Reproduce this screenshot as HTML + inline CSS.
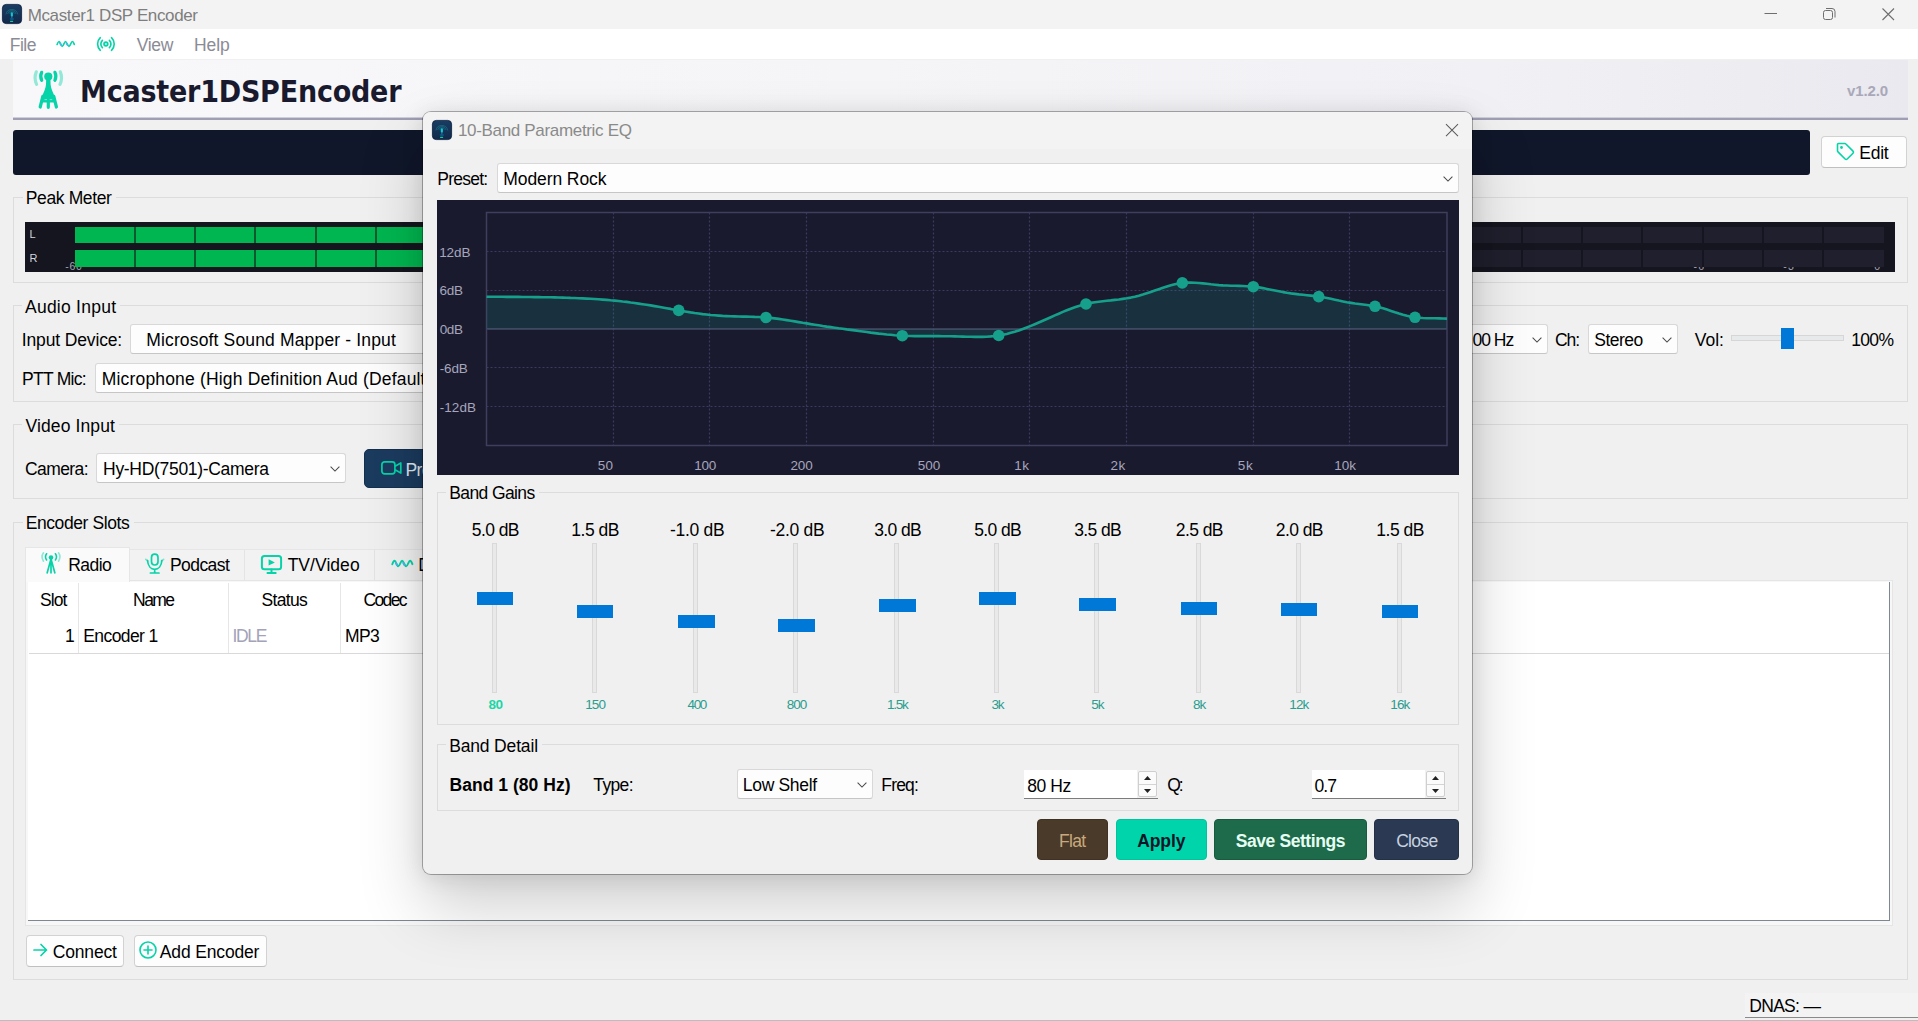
<!DOCTYPE html>
<html lang="en"><head><meta charset="utf-8"><title>Mcaster1 DSP Encoder</title>
<style>
html,body{margin:0;padding:0;}
body{width:1918px;height:1021px;position:relative;overflow:hidden;background:#f0f0f0;font-family:"Liberation Sans",sans-serif;}
.b{position:absolute;box-sizing:border-box;}
.t{position:absolute;white-space:pre;line-height:1;}
svg{position:absolute;overflow:visible;}
.gb{border:1px solid #dcdcdc;}
.combo{background:#fdfdfd;border:1px solid #d8d8d8;border-bottom-color:#c6c6c6;border-radius:3px;}
.btn{background:#fdfdfd;border:1px solid #d2d2d2;border-bottom-color:#bfbfbf;border-radius:4px;}
.spin{background:#fff;border-bottom:1px solid #7c7c7c;}

</style></head>
<body>
<div class="b " style="left:0px;top:0px;width:1918px;height:29px;background:#f3f3f3;"></div>
<svg style="left:2px;top:4px" width="20" height="20" viewBox="0 0 20 20"><defs><linearGradient id="ig1" x1="0" y1="0" x2="0" y2="1"><stop offset="0" stop-color="#193d63"/><stop offset="1" stop-color="#10294a"/></linearGradient></defs><rect x="0.4" y="0.4" width="19.2" height="19.2" rx="3.8" fill="url(#ig1)" stroke="#071b3c" stroke-width="0.8"/><g fill="none" stroke="#1b8a96" stroke-width="0.7" opacity=".75"><path d="M7.3 9.6a2.6 2.6 0 0 1 5 0"/><path d="M5.6 9.9a4.3 4.3 0 0 1 8.400 0"/><path d="M3.9 10.400a6 6 0 0 1 11.800 0"/></g><rect x="8.800" y="8.300" width="2.100" height="4.400" rx="1.050" fill="#10c8d4"/><rect x="9.300" y="12.500" width="1.100" height="1.800" fill="#1583b0"/><ellipse cx="9.850" cy="15" rx="2.200" ry="0.900" fill="#12568c"/><rect x="8" y="16.800" width="3.200" height="1.100" rx=".4" fill="#19c79a"/></svg>
<span class="t" style="left:27.64px;top:7px;font-size:17px;color:#7e7e7e;letter-spacing:-0.364px;">Mcaster1 DSP Encoder</span>
<svg style="left:1764px;top:7px" width="132" height="15" viewBox="1764 7 132 15"><g fill="none" stroke="#6e6e6e" stroke-width="1"><path d="M1764.500 13.500h12.500"/><rect x="1823.500" y="10.500" width="9" height="9" rx="2"/><path d="M1826 8.500h6a3 3 0 0 1 3 3v6"/></g><path d="M1882.500 8.500l11.500 11.500M1894 8.500l-11.500 11.500" stroke="#6e6e6e" stroke-width="1.100" fill="none"/></svg>
<div class="b " style="left:0px;top:29px;width:1918px;height:30px;background:#ffffff;"></div>
<span class="t" style="left:9.80px;top:37px;font-size:17.5px;color:#8b8b95;letter-spacing:-0.540px;">File</span>
<span class="t" style="left:136.71px;top:37px;font-size:17.5px;color:#8b8b95;letter-spacing:-0.337px;">View</span>
<span class="t" style="left:194.05px;top:37px;font-size:17.5px;color:#8b8b95;letter-spacing:-0.113px;">Help</span>
<svg style="left:56.4px;top:40px" width="19" height="8" viewBox="56.400 40 19 8"><g fill="none" stroke-width="1.650" stroke-linecap="round" stroke-linejoin="round"><path d="M57.500 44.500C58.200 42.500 58.800 41.500 59.500 41.500C60.600 41.500 61.500 46.300 62.600 46.300C63.800 46.300 64.800 41.500 65.900 41.500C67 41.500 68.200 46.300 69.400 46.300C70.600 46.300 71.600 41.500 72.700 41.500C73.500 41.500 74.200 43 74.700 44.400" stroke="#06d3a8"/><path d="M60.500 43.500L61.500 45.200M66.900 43.500L67.900 45.200" stroke="#4db5ee"/></g></svg>
<svg style="left:96px;top:36px" width="21" height="16" viewBox="96 36 21 16"><g fill="none" stroke="#06d3a8" stroke-width="1.650" stroke-linecap="round"><circle cx="105.900" cy="44" r="1.900" fill="rgba(15,210,166,.25)"/><path d="M102.400 40.300a5.200 5.200 0 0 0 0 7.400M109.400 40.300a5.200 5.200 0 0 1 0 7.400M100.300 37.700a8.700 8.700 0 0 0 0 12.600M111.500 37.700a8.700 8.700 0 0 1 0 12.600"/></g></svg>
<div class="b " style="left:13px;top:60px;width:1895px;height:58px;background:linear-gradient(90deg,#f8f8fa 0%,#f5f5f8 45%,#f1f1f5 78%,#e9e9ef 100%);"></div>
<div class="b " style="left:13px;top:117px;width:1895px;height:1px;background:#cfcedb;"></div>
<div class="b " style="left:13px;top:118px;width:1895px;height:2px;background:#9f9eb5;"></div>
<svg style="left:32.6px;top:69.6px" width="31" height="40" viewBox="0 0 31 40"><g fill="none" stroke="#06d3a8" stroke-linecap="round" stroke-width="3.200"><path d="M8.700 2.300Q6.700 6.300 8.700 10.300M21.900 2.300Q23.900 6.300 21.900 10.300"/><path d="M3.300 1.800Q0.700 8 3.600 14.300M27.300 1.800Q29.900 8 27 14.300" opacity=".42"/><path d="M9.800 26.500L7.200 37M15.300 30V37.300M20.800 26.500L23.400 37"/></g><circle cx="15.300" cy="6.600" r="4.100" fill="#06d3a8"/><path d="M13.200 8.500L13 14.500C12.800 16.500 12.400 18.300 11.700 20L9.400 25.500L8.300 32.500H22.300L21.200 25.500L18.900 20C18.200 18.300 17.800 16.500 17.600 14.500L17.400 8.500Z" fill="#06d3a8"/><rect x="11.500" y="29.200" width="2.500" height="0.900" fill="#f6f6f9" opacity=".55"/><rect x="16.700" y="29.200" width="2.500" height="0.900" fill="#f6f6f9" opacity=".55"/></svg>
<span class="t" style="left:80.02px;top:77px;font-size:30px;color:#1a1a2e;font-weight:700;font-family:'DejaVu Sans Condensed', 'DejaVu Sans', sans-serif;letter-spacing:-0.221px;">Mcaster1DSPEncoder</span>
<span class="t" style="left:1847.07px;top:83px;font-size:15px;color:#a9a8b9;font-weight:700;letter-spacing:-0.149px;">v1.2.0</span>
<div class="b " style="left:13px;top:130px;width:1797px;height:45px;background:#10172a;border-radius:3px;"></div>
<div class="b btn" style="left:1821px;top:136px;width:85.5px;height:32px;"></div>
<svg style="left:1836px;top:142px" width="19" height="19" viewBox="0 0 19 19"><path d="M1.500 2.500a1 1 0 0 1 1 -1h6.300a1.500 1.500 0 0 1 1.100 0.500l7.100 7.100a1.500 1.500 0 0 1 0 2.100l-5.800 5.800a1.500 1.500 0 0 1 -2.100 0l-7.100 -7.100a1.500 1.500 0 0 1 -0.500 -1.100z" fill="none" stroke="#06d3a8" stroke-width="1.600" stroke-linejoin="round"/><circle cx="5.500" cy="5.500" r="1.400" fill="#06d3a8"/></svg>
<span class="t" style="left:1859.25px;top:145px;font-size:17.5px;color:#000;letter-spacing:-0.247px;">Edit</span>
<div class="b gb" style="left:13px;top:197px;width:1895px;height:86px;"></div>
<div class="b " style="left:23.3px;top:195px;width:93px;height:5px;background:#f0f0f0;"></div>
<span class="t" style="left:25.80px;top:190px;font-size:17.5px;color:#000;letter-spacing:-0.375px;">Peak Meter</span>
<div class="b " style="left:25px;top:222px;width:1870px;height:49.5px;background:#15151f;"></div>
<span class="t" style="left:29.49px;top:229px;font-size:11px;color:#d4d4dc;">L</span>
<span class="t" style="left:29.50px;top:253px;font-size:11px;color:#d4d4dc;">R</span>
<span class="t" style="left:65.34px;top:261px;font-size:10.5px;color:#a4a4b2;letter-spacing:0.664px;">-60</span>
<span class="t" style="left:1693.54px;top:261px;font-size:10.5px;color:#a4a4b2;letter-spacing:1.111px;">-6</span>
<span class="t" style="left:1783.34px;top:261px;font-size:10.5px;color:#a4a4b2;letter-spacing:1.156px;">-3</span>
<span class="t" style="left:1874.13px;top:261px;font-size:10.5px;color:#a4a4b2;">0</span>
<div class="b " style="left:75px;top:226.5px;width:1809px;height:16.5px;background:#1f1f2d;"></div>
<div class="b " style="left:75px;top:226.5px;width:1356.75px;height:16.5px;background:#00b650;"></div>
<div class="b " style="left:134px;top:226.5px;width:1.7px;height:16.5px;background:#0b5a2e;"></div>
<div class="b " style="left:194px;top:226.5px;width:1.7px;height:16.5px;background:#0b5a2e;"></div>
<div class="b " style="left:254px;top:226.5px;width:1.7px;height:16.5px;background:#0b5a2e;"></div>
<div class="b " style="left:315px;top:226.5px;width:1.7px;height:16.5px;background:#0b5a2e;"></div>
<div class="b " style="left:375px;top:226.5px;width:1.7px;height:16.5px;background:#0b5a2e;"></div>
<div class="b " style="left:435px;top:226.5px;width:1.7px;height:16.5px;background:#0b5a2e;"></div>
<div class="b " style="left:496px;top:226.5px;width:1.7px;height:16.5px;background:#0b5a2e;"></div>
<div class="b " style="left:556px;top:226.5px;width:1.7px;height:16.5px;background:#0b5a2e;"></div>
<div class="b " style="left:616px;top:226.5px;width:1.7px;height:16.5px;background:#0b5a2e;"></div>
<div class="b " style="left:677px;top:226.5px;width:1.7px;height:16.5px;background:#0b5a2e;"></div>
<div class="b " style="left:737px;top:226.5px;width:1.7px;height:16.5px;background:#0b5a2e;"></div>
<div class="b " style="left:797px;top:226.5px;width:1.7px;height:16.5px;background:#0b5a2e;"></div>
<div class="b " style="left:857px;top:226.5px;width:1.7px;height:16.5px;background:#0b5a2e;"></div>
<div class="b " style="left:918px;top:226.5px;width:1.7px;height:16.5px;background:#0b5a2e;"></div>
<div class="b " style="left:978px;top:226.5px;width:1.7px;height:16.5px;background:#0b5a2e;"></div>
<div class="b " style="left:1038px;top:226.5px;width:1.7px;height:16.5px;background:#0b5a2e;"></div>
<div class="b " style="left:1099px;top:226.5px;width:1.7px;height:16.5px;background:#0b5a2e;"></div>
<div class="b " style="left:1159px;top:226.5px;width:1.7px;height:16.5px;background:#0b5a2e;"></div>
<div class="b " style="left:1219px;top:226.5px;width:1.7px;height:16.5px;background:#0b5a2e;"></div>
<div class="b " style="left:1280px;top:226.5px;width:1.7px;height:16.5px;background:#0b5a2e;"></div>
<div class="b " style="left:1340px;top:226.5px;width:1.7px;height:16.5px;background:#0b5a2e;"></div>
<div class="b " style="left:1400px;top:226.5px;width:1.7px;height:16.5px;background:#0b5a2e;"></div>
<div class="b " style="left:1460px;top:226.5px;width:1.7px;height:16.5px;background:#15151f;"></div>
<div class="b " style="left:1521px;top:226.5px;width:1.7px;height:16.5px;background:#15151f;"></div>
<div class="b " style="left:1581px;top:226.5px;width:1.7px;height:16.5px;background:#15151f;"></div>
<div class="b " style="left:1641px;top:226.5px;width:1.7px;height:16.5px;background:#15151f;"></div>
<div class="b " style="left:1702px;top:226.5px;width:1.7px;height:16.5px;background:#15151f;"></div>
<div class="b " style="left:1762px;top:226.5px;width:1.7px;height:16.5px;background:#15151f;"></div>
<div class="b " style="left:1822px;top:226.5px;width:1.7px;height:16.5px;background:#15151f;"></div>
<div class="b " style="left:75px;top:250px;width:1809px;height:16.5px;background:#1f1f2d;"></div>
<div class="b " style="left:75px;top:250px;width:1356.75px;height:16.5px;background:#00b650;"></div>
<div class="b " style="left:134px;top:250px;width:1.7px;height:16.5px;background:#0b5a2e;"></div>
<div class="b " style="left:194px;top:250px;width:1.7px;height:16.5px;background:#0b5a2e;"></div>
<div class="b " style="left:254px;top:250px;width:1.7px;height:16.5px;background:#0b5a2e;"></div>
<div class="b " style="left:315px;top:250px;width:1.7px;height:16.5px;background:#0b5a2e;"></div>
<div class="b " style="left:375px;top:250px;width:1.7px;height:16.5px;background:#0b5a2e;"></div>
<div class="b " style="left:435px;top:250px;width:1.7px;height:16.5px;background:#0b5a2e;"></div>
<div class="b " style="left:496px;top:250px;width:1.7px;height:16.5px;background:#0b5a2e;"></div>
<div class="b " style="left:556px;top:250px;width:1.7px;height:16.5px;background:#0b5a2e;"></div>
<div class="b " style="left:616px;top:250px;width:1.7px;height:16.5px;background:#0b5a2e;"></div>
<div class="b " style="left:677px;top:250px;width:1.7px;height:16.5px;background:#0b5a2e;"></div>
<div class="b " style="left:737px;top:250px;width:1.7px;height:16.5px;background:#0b5a2e;"></div>
<div class="b " style="left:797px;top:250px;width:1.7px;height:16.5px;background:#0b5a2e;"></div>
<div class="b " style="left:857px;top:250px;width:1.7px;height:16.5px;background:#0b5a2e;"></div>
<div class="b " style="left:918px;top:250px;width:1.7px;height:16.5px;background:#0b5a2e;"></div>
<div class="b " style="left:978px;top:250px;width:1.7px;height:16.5px;background:#0b5a2e;"></div>
<div class="b " style="left:1038px;top:250px;width:1.7px;height:16.5px;background:#0b5a2e;"></div>
<div class="b " style="left:1099px;top:250px;width:1.7px;height:16.5px;background:#0b5a2e;"></div>
<div class="b " style="left:1159px;top:250px;width:1.7px;height:16.5px;background:#0b5a2e;"></div>
<div class="b " style="left:1219px;top:250px;width:1.7px;height:16.5px;background:#0b5a2e;"></div>
<div class="b " style="left:1280px;top:250px;width:1.7px;height:16.5px;background:#0b5a2e;"></div>
<div class="b " style="left:1340px;top:250px;width:1.7px;height:16.5px;background:#0b5a2e;"></div>
<div class="b " style="left:1400px;top:250px;width:1.7px;height:16.5px;background:#0b5a2e;"></div>
<div class="b " style="left:1460px;top:250px;width:1.7px;height:16.5px;background:#15151f;"></div>
<div class="b " style="left:1521px;top:250px;width:1.7px;height:16.5px;background:#15151f;"></div>
<div class="b " style="left:1581px;top:250px;width:1.7px;height:16.5px;background:#15151f;"></div>
<div class="b " style="left:1641px;top:250px;width:1.7px;height:16.5px;background:#15151f;"></div>
<div class="b " style="left:1702px;top:250px;width:1.7px;height:16.5px;background:#15151f;"></div>
<div class="b " style="left:1762px;top:250px;width:1.7px;height:16.5px;background:#15151f;"></div>
<div class="b " style="left:1822px;top:250px;width:1.7px;height:16.5px;background:#15151f;"></div>
<div class="b gb" style="left:13px;top:305px;width:1895px;height:97px;"></div>
<div class="b " style="left:21.6px;top:303px;width:98.8px;height:5px;background:#f0f0f0;"></div>
<span class="t" style="left:24.98px;top:299px;font-size:17.5px;color:#000;letter-spacing:0.254px;">Audio Input</span>
<span class="t" style="left:21.79px;top:332px;font-size:17.5px;color:#000;letter-spacing:-0.142px;">Input Device:</span>
<div class="b combo" style="left:130px;top:324px;width:400px;height:29.5px;"></div>
<span class="t" style="left:146.21px;top:332px;font-size:17.5px;color:#000;letter-spacing:0.155px;">Microsoft Sound Mapper - Input</span>
<span class="t" style="left:22.05px;top:371px;font-size:17.5px;color:#000;letter-spacing:-0.741px;">PTT Mic:</span>
<div class="b combo" style="left:95px;top:363px;width:400px;height:29.5px;"></div>
<span class="t" style="left:101.80px;top:371px;font-size:17.5px;color:#000;letter-spacing:0.168px;">Microphone (High Definition Aud (Default</span>
<div class="b combo" style="left:1400px;top:324px;width:148px;height:29.5px;"></div>
<span class="t" style="left:1472.40px;top:332px;font-size:17.5px;color:#000;letter-spacing:-0.988px;">00 Hz</span>
<svg style="left:1531.5px;top:337px" width="10" height="6" viewBox="0 0 10 6"><path d="M0.600 0.600l4.400 4.500l4.400 -4.500" fill="none" stroke="#4a4a4a" stroke-width="1.050"/></svg>
<span class="t" style="left:1555.00px;top:332px;font-size:17.5px;color:#000;letter-spacing:-1.109px;">Ch:</span>
<div class="b combo" style="left:1588px;top:324px;width:89.5px;height:29.5px;"></div>
<span class="t" style="left:1594.23px;top:332px;font-size:17.5px;color:#000;letter-spacing:-0.490px;">Stereo</span>
<svg style="left:1661.5px;top:337px" width="10" height="6" viewBox="0 0 10 6"><path d="M0.600 0.600l4.400 4.500l4.400 -4.500" fill="none" stroke="#4a4a4a" stroke-width="1.050"/></svg>
<span class="t" style="left:1694.71px;top:332px;font-size:17.5px;color:#000;letter-spacing:0.024px;">Vol:</span>
<div class="b " style="left:1730.5px;top:335px;width:113.5px;height:5.5px;background:#e7eaea;border:1px solid #d6d6d6;"></div>
<div class="b " style="left:1780.5px;top:327.5px;width:13.5px;height:21.5px;background:#0078d7;"></div>
<span class="t" style="left:1851.19px;top:332px;font-size:17.5px;color:#000;letter-spacing:-0.670px;">100%</span>
<div class="b gb" style="left:13px;top:424px;width:1895px;height:75px;"></div>
<div class="b " style="left:21.6px;top:422px;width:97.7px;height:5px;background:#f0f0f0;"></div>
<span class="t" style="left:25.48px;top:418px;font-size:17.5px;color:#000;letter-spacing:0.114px;">Video Input</span>
<span class="t" style="left:25.00px;top:461px;font-size:17.5px;color:#000;letter-spacing:-0.590px;">Camera:</span>
<div class="b combo" style="left:96px;top:453px;width:249.5px;height:29.5px;"></div>
<span class="t" style="left:103.05px;top:461px;font-size:17.5px;color:#000;letter-spacing:-0.307px;">Hy-HD(7501)-Camera</span>
<svg style="left:329.5px;top:466px" width="10" height="6" viewBox="0 0 10 6"><path d="M0.600 0.600l4.400 4.500l4.400 -4.500" fill="none" stroke="#4a4a4a" stroke-width="1.050"/></svg>
<div class="b " style="left:363.5px;top:449px;width:120px;height:38.5px;background:#1b3b5f;border:1px solid #14304f;border-radius:5px;"></div>
<svg style="left:381px;top:461px" width="21" height="14" viewBox="0 0 21 14"><g fill="none" stroke="#06d3a8" stroke-width="1.700" stroke-linejoin="round"><rect x="0.900" y="0.900" width="13" height="12" rx="2.600"/><path d="M14 5.200l5.800 -3.300v10.200l-5.800 -3.300"/></g></svg>
<span class="t" style="left:405.60px;top:462px;font-size:17.5px;color:#dfe6ee;letter-spacing:-0.717px;">Preview</span>
<div class="b gb" style="left:13px;top:522px;width:1895px;height:457.5px;"></div>
<div class="b " style="left:23.1px;top:520px;width:110.7px;height:5px;background:#f0f0f0;"></div>
<span class="t" style="left:25.69px;top:515px;font-size:17.5px;color:#000;letter-spacing:-0.414px;">Encoder Slots</span>
<div class="b " style="left:25px;top:580px;width:1867.5px;height:345.5px;border:1px solid #e5e5e5;background:#f7f7f7;"></div>
<div class="b " style="left:28px;top:582px;width:1862px;height:338.5px;background:#fff;border-right:1px solid #7f8794;border-bottom:1px solid #7f8794;"></div>
<div class="b " style="left:129px;top:549px;width:116px;height:31px;background:#f2f2f2;border-top:1px solid #e6e6e6;border-right:1px solid #e4e4e4;"></div>
<div class="b " style="left:245px;top:549px;width:130px;height:31px;background:#f2f2f2;border-top:1px solid #e6e6e6;border-right:1px solid #e4e4e4;"></div>
<div class="b " style="left:375px;top:549px;width:130px;height:31px;background:#f2f2f2;border-top:1px solid #e6e6e6;border-right:1px solid #e4e4e4;"></div>
<div class="b " style="left:25px;top:547px;width:105px;height:35px;background:#fafafa;border:1px solid #e6e6e6;border-bottom:none;"></div>
<svg style="left:41.400px;top:552.300px" width="20" height="22.500" viewBox="0 0 20 23" preserveAspectRatio="none"><g fill="none" stroke="#06d3a8" stroke-linecap="round" stroke-width="1.600"><path d="M5.600 1.800Q3.400 5 5.600 8.200M14.400 1.800Q16.600 5 14.400 8.200"/><path d="M2.500 0.800Q-0.400 5 2.500 9.400M17.500 0.800Q20.400 5 17.500 9.400" opacity=".45"/><path d="M10 7L6 22M10 7V22M10 7L14 22" stroke-linecap="butt" stroke-width="1.700"/></g><circle cx="10" cy="5.600" r="2.300" fill="#06d3a8"/></svg>
<span class="t" style="left:68.24px;top:557px;font-size:17.5px;color:#000;letter-spacing:-0.566px;">Radio</span>
<svg style="left:144px;top:553px" width="21" height="22" viewBox="144 553 21 22"><g fill="none" stroke="#06d3a8" stroke-width="1.700" stroke-linecap="round"><rect x="151.500" y="554.200" width="6.500" height="10.800" rx="3.200"/><path d="M147.500 560.500c0.500 5.500 3.500 8.800 7.200 8.800s6.700 -3.300 7.200 -8.800M154.700 569.500v3.300M150.400 573h8.600"/><path d="M145.800 559.300l2 1.600M163.600 559.300l-2 1.600" opacity=".5"/></g></svg>
<span class="t" style="left:170.04px;top:557px;font-size:17.5px;color:#000;letter-spacing:-0.579px;">Podcast</span>
<svg style="left:260px;top:554px" width="23" height="21" viewBox="260 554 23 21"><g fill="none" stroke="#06d3a8" stroke-width="2" stroke-linejoin="round" stroke-linecap="round"><rect x="261.900" y="556" width="19.200" height="13.200" rx="2.500"/><path d="M271.500 569.500v3.300M267.500 573h8.200"/></g><path d="M268.600 559.200l6.300 3.200l-6.300 3.200z" fill="#06d3a8"/></svg>
<span class="t" style="left:287.64px;top:557px;font-size:17.5px;color:#000;letter-spacing:0.048px;">TV/Video</span>
<svg style="left:391px;top:559px" width="22.23" height="9.36" viewBox="56.400 40 19 8"><g fill="none" stroke-width="1.650" stroke-linecap="round" stroke-linejoin="round"><path d="M57.500 44.500C58.200 42.500 58.800 41.500 59.500 41.500C60.600 41.500 61.500 46.300 62.600 46.300C63.800 46.300 64.800 41.500 65.900 41.500C67 41.500 68.200 46.300 69.400 46.300C70.600 46.300 71.600 41.500 72.700 41.500C73.500 41.500 74.200 43 74.700 44.400" stroke="#06d3a8"/><path d="M60.500 43.500L61.500 45.200M66.900 43.500L67.900 45.200" stroke="#4db5ee"/></g></svg>
<span class="t" style="left:418.21px;top:557px;font-size:17.5px;color:#000;letter-spacing:-0.718px;">DSP</span>
<div class="b " style="left:78px;top:583px;width:1px;height:70px;background:#e6e6e6;"></div>
<div class="b " style="left:228px;top:583px;width:1px;height:70px;background:#e6e6e6;"></div>
<div class="b " style="left:340px;top:583px;width:1px;height:70px;background:#e6e6e6;"></div>
<div class="b " style="left:452px;top:583px;width:1px;height:70px;background:#e6e6e6;"></div>
<div class="b " style="left:29px;top:653px;width:1860px;height:1px;background:#d9d9d9;"></div>
<span class="t" style="left:40.04px;top:592px;font-size:17.5px;color:#000;letter-spacing:-0.945px;">Slot</span>
<span class="t" style="left:133.05px;top:592px;font-size:17.5px;color:#000;letter-spacing:-1.549px;">Name</span>
<span class="t" style="left:261.55px;top:592px;font-size:17.5px;color:#000;letter-spacing:-0.662px;">Status</span>
<span class="t" style="left:363.40px;top:592px;font-size:17.5px;color:#000;letter-spacing:-1.607px;">Codec</span>
<span class="t" style="left:65.07px;top:628px;font-size:17.5px;color:#000;">1</span>
<span class="t" style="left:83.24px;top:628px;font-size:17.5px;color:#000;letter-spacing:-0.582px;">Encoder 1</span>
<span class="t" style="left:232.41px;top:628px;font-size:17.5px;color:#a3a2b8;letter-spacing:-1.315px;">IDLE</span>
<span class="t" style="left:345.04px;top:628px;font-size:17.5px;color:#000;letter-spacing:-0.622px;">MP3</span>
<div class="b btn" style="left:26px;top:935px;width:97.5px;height:31.5px;"></div>
<svg style="left:33px;top:943px" width="15" height="14" viewBox="0 0 15 14"><path d="M1 7h12.500M8 1.500l5.500 5.500l-5.500 5.500" fill="none" stroke="#06d3a8" stroke-width="1.700" stroke-linecap="round" stroke-linejoin="round"/></svg>
<span class="t" style="left:52.84px;top:944px;font-size:17.5px;color:#000;letter-spacing:-0.196px;">Connect</span>
<div class="b btn" style="left:133.5px;top:935px;width:133px;height:31.5px;"></div>
<svg style="left:138.500px;top:941px" width="18" height="18" viewBox="0 0 18 18"><g fill="none" stroke="#06d3a8" stroke-width="1.600" stroke-linecap="round"><circle cx="9" cy="9" r="8"/><path d="M9 5v8M5 9h8"/></g></svg>
<span class="t" style="left:159.86px;top:944px;font-size:17.5px;color:#000;letter-spacing:-0.160px;">Add Encoder</span>
<div class="b " style="left:0px;top:1020px;width:1918px;height:1px;background:#bdbdbd;"></div>
<div class="b " style="left:1745px;top:992.5px;width:173px;height:25px;background:#f3f3f3;border-bottom:1px solid #8a8a8a;"></div>
<span class="t" style="left:1749.24px;top:998px;font-size:17.5px;color:#000;letter-spacing:-0.688px;">DNAS: —</span>
<div class="b " style="left:422px;top:111px;width:1051px;height:764px;background:#f0f0f0;background-clip:padding-box;border:1px solid rgba(0,0,0,.30);border-radius:9px;box-shadow:0 32px 64px rgba(0,0,0,.19),0 2px 21px rgba(0,0,0,.10);"></div>
<div class="b " style="left:423px;top:112px;width:1049px;height:37px;background:#f3f3f3;border-radius:8px 8px 0 0;"></div>
<svg style="left:432px;top:120px" width="20" height="20" viewBox="0 0 20 20"><defs><linearGradient id="ig2" x1="0" y1="0" x2="0" y2="1"><stop offset="0" stop-color="#193d63"/><stop offset="1" stop-color="#10294a"/></linearGradient></defs><rect x="0.4" y="0.4" width="19.2" height="19.2" rx="3.8" fill="url(#ig2)" stroke="#071b3c" stroke-width="0.8"/><g fill="none" stroke="#1b8a96" stroke-width="0.7" opacity=".75"><path d="M7.3 9.6a2.6 2.6 0 0 1 5 0"/><path d="M5.6 9.9a4.3 4.3 0 0 1 8.400 0"/><path d="M3.9 10.400a6 6 0 0 1 11.800 0"/></g><rect x="8.800" y="8.300" width="2.100" height="4.400" rx="1.050" fill="#10c8d4"/><rect x="9.300" y="12.500" width="1.100" height="1.800" fill="#1583b0"/><ellipse cx="9.850" cy="15" rx="2.200" ry="0.900" fill="#12568c"/><rect x="8" y="16.800" width="3.200" height="1.100" rx=".4" fill="#19c79a"/></svg>
<span class="t" style="left:457.91px;top:122px;font-size:17px;color:#8a8a8a;letter-spacing:-0.325px;">10-Band Parametric EQ</span>
<svg style="left:1445px;top:123px" width="15" height="15" viewBox="1445 123 15 15"><path d="M1446 124.200l12 12M1458 124.200l-12 12" stroke="#5c5c5c" stroke-width="1.050" fill="none"/></svg>
<span class="t" style="left:437.24px;top:171px;font-size:17.5px;color:#000;letter-spacing:-0.760px;">Preset:</span>
<div class="b combo" style="left:497px;top:163px;width:961.5px;height:30px;"></div>
<span class="t" style="left:503.25px;top:171px;font-size:17.5px;color:#000;letter-spacing:-0.083px;">Modern Rock</span>
<svg style="left:1442.8px;top:176px" width="10" height="6" viewBox="0 0 10 6"><path d="M0.600 0.600l4.400 4.500l4.400 -4.500" fill="none" stroke="#4a4a4a" stroke-width="1.050"/></svg>
<svg style="left:437px;top:200px" width="1022" height="275" viewBox="437 200 1022 275"><rect x="437" y="200" width="1022" height="275" fill="#1a1a2e"/><path d="M613.5 212.5V445.5" stroke="#3a3a62" stroke-width="1.200" stroke-dasharray="2 2" fill="none"/><path d="M709.5 212.5V445.5" stroke="#3a3a62" stroke-width="1.200" stroke-dasharray="2 2" fill="none"/><path d="M806.5 212.5V445.5" stroke="#3a3a62" stroke-width="1.200" stroke-dasharray="2 2" fill="none"/><path d="M933.5 212.5V445.5" stroke="#3a3a62" stroke-width="1.200" stroke-dasharray="2 2" fill="none"/><path d="M1029.5 212.5V445.5" stroke="#3a3a62" stroke-width="1.200" stroke-dasharray="2 2" fill="none"/><path d="M1126.5 212.5V445.5" stroke="#3a3a62" stroke-width="1.200" stroke-dasharray="2 2" fill="none"/><path d="M1253.5 212.5V445.5" stroke="#3a3a62" stroke-width="1.200" stroke-dasharray="2 2" fill="none"/><path d="M1349.5 212.5V445.5" stroke="#3a3a62" stroke-width="1.200" stroke-dasharray="2 2" fill="none"/><path d="M486.5 251.5H1447" stroke="#3a3a62" stroke-width="1.200" stroke-dasharray="2 2" fill="none"/><path d="M486.5 290.5H1447" stroke="#3a3a62" stroke-width="1.200" stroke-dasharray="2 2" fill="none"/><path d="M486.5 367.5H1447" stroke="#3a3a62" stroke-width="1.200" stroke-dasharray="2 2" fill="none"/><path d="M486.5 406.5H1447" stroke="#3a3a62" stroke-width="1.200" stroke-dasharray="2 2" fill="none"/><path d="M486.5 329H1447" stroke="#4a4a6a" stroke-width="1.500" fill="none"/><rect x="486.5" y="212.5" width="960.5" height="233.0" fill="none" stroke="#3e3e5e" stroke-width="1.500"/><path d="M486.5 296.8 L490.5 296.8 L494.5 296.8 L498.5 296.8 L502.5 296.8 L506.5 296.9 L510.5 296.9 L514.5 296.9 L518.5 296.9 L522.5 297.0 L526.5 297.0 L530.5 297.0 L534.5 297.1 L538.5 297.1 L542.5 297.2 L546.5 297.3 L550.5 297.3 L554.5 297.4 L558.5 297.5 L562.5 297.6 L566.5 297.7 L570.5 297.9 L574.5 298.0 L578.5 298.2 L582.5 298.4 L586.6 298.6 L590.6 298.8 L594.6 299.0 L598.6 299.3 L602.6 299.6 L606.6 299.9 L610.6 300.3 L614.6 300.6 L618.6 301.0 L622.6 301.5 L626.6 301.9 L630.6 302.5 L634.6 303.0 L638.6 303.6 L642.6 304.2 L646.6 304.8 L650.6 305.4 L654.6 306.1 L658.6 306.8 L662.6 307.5 L666.6 308.2 L670.6 308.9 L674.6 309.7 L678.6 310.4 L682.6 311.1 L686.6 311.7 L690.6 312.4 L694.6 313.0 L698.6 313.5 L702.6 314.1 L706.6 314.5 L710.6 315.0 L714.6 315.3 L718.6 315.6 L722.6 315.9 L726.6 316.1 L730.6 316.3 L734.6 316.4 L738.6 316.5 L742.6 316.6 L746.6 316.6 L750.6 316.7 L754.6 316.9 L758.6 317.0 L762.6 317.3 L766.6 317.6 L770.6 317.9 L774.6 318.4 L778.7 318.9 L782.7 319.5 L786.7 320.1 L790.7 320.7 L794.7 321.4 L798.7 322.1 L802.7 322.8 L806.7 323.4 L810.7 324.1 L814.7 324.7 L818.7 325.3 L822.7 326.0 L826.7 326.6 L830.7 327.1 L834.7 327.7 L838.7 328.3 L842.7 328.8 L846.7 329.4 L850.7 329.9 L854.7 330.4 L858.7 331.0 L862.7 331.5 L866.7 332.0 L870.7 332.6 L874.7 333.1 L878.7 333.6 L882.7 334.0 L886.7 334.5 L890.7 334.8 L894.7 335.2 L898.7 335.5 L902.7 335.7 L906.7 335.9 L910.7 336.0 L914.7 336.1 L918.7 336.1 L922.7 336.1 L926.7 336.1 L930.7 336.1 L934.7 336.1 L938.7 336.1 L942.7 336.2 L946.7 336.2 L950.7 336.3 L954.7 336.4 L958.7 336.5 L962.7 336.6 L966.8 336.7 L970.8 336.8 L974.8 336.9 L978.8 336.9 L982.8 336.9 L986.8 336.7 L990.8 336.4 L994.8 336.0 L998.8 335.5 L1002.8 334.7 L1006.8 333.9 L1010.8 332.8 L1014.8 331.7 L1018.8 330.4 L1022.8 329.0 L1026.8 327.5 L1030.8 325.9 L1034.8 324.2 L1038.8 322.5 L1042.8 320.8 L1046.8 319.0 L1050.8 317.2 L1054.8 315.4 L1058.8 313.7 L1062.8 311.9 L1066.8 310.3 L1070.8 308.7 L1074.8 307.3 L1078.8 305.9 L1082.8 304.8 L1086.8 303.8 L1090.8 302.9 L1094.8 302.2 L1098.8 301.7 L1102.8 301.2 L1106.8 300.8 L1110.8 300.4 L1114.8 299.9 L1118.8 299.5 L1122.8 298.9 L1126.8 298.3 L1130.8 297.6 L1134.8 296.7 L1138.8 295.7 L1142.8 294.6 L1146.8 293.3 L1150.8 292.0 L1154.8 290.6 L1158.8 289.2 L1162.9 287.8 L1166.9 286.5 L1170.9 285.3 L1174.9 284.2 L1178.9 283.4 L1182.9 282.9 L1186.9 282.6 L1190.9 282.5 L1194.9 282.7 L1198.9 283.0 L1202.9 283.4 L1206.9 283.8 L1210.9 284.3 L1214.9 284.7 L1218.9 285.1 L1222.9 285.4 L1226.9 285.5 L1230.9 285.7 L1234.9 285.8 L1238.9 285.9 L1242.9 286.0 L1246.9 286.2 L1250.9 286.5 L1254.9 286.9 L1258.9 287.4 L1262.9 288.1 L1266.9 288.9 L1270.9 289.7 L1274.9 290.5 L1278.9 291.3 L1282.9 292.1 L1286.9 292.8 L1290.9 293.4 L1294.9 293.9 L1298.9 294.4 L1302.9 294.8 L1306.9 295.2 L1310.9 295.6 L1314.9 296.1 L1318.9 296.6 L1322.9 297.3 L1326.9 298.0 L1330.9 298.8 L1334.9 299.7 L1338.9 300.6 L1342.9 301.4 L1346.9 302.2 L1351.0 302.9 L1355.0 303.5 L1359.0 304.0 L1363.0 304.5 L1367.0 305.0 L1371.0 305.6 L1375.0 306.3 L1379.0 307.2 L1383.0 308.3 L1387.0 309.6 L1391.0 310.9 L1395.0 312.3 L1399.0 313.6 L1403.0 314.8 L1407.0 315.8 L1411.0 316.7 L1415.0 317.3 L1419.0 317.7 L1423.0 318.0 L1427.0 318.2 L1431.0 318.3 L1435.0 318.3 L1439.0 318.4 L1443.0 318.5 L1447.0 318.6 L1447 329 L486.5 329Z" fill="rgba(22,160,140,.17)" stroke="none"/><path d="M486.5 296.8 L490.5 296.8 L494.5 296.8 L498.5 296.8 L502.5 296.8 L506.5 296.9 L510.5 296.9 L514.5 296.9 L518.5 296.9 L522.5 297.0 L526.5 297.0 L530.5 297.0 L534.5 297.1 L538.5 297.1 L542.5 297.2 L546.5 297.3 L550.5 297.3 L554.5 297.4 L558.5 297.5 L562.5 297.6 L566.5 297.7 L570.5 297.9 L574.5 298.0 L578.5 298.2 L582.5 298.4 L586.6 298.6 L590.6 298.8 L594.6 299.0 L598.6 299.3 L602.6 299.6 L606.6 299.9 L610.6 300.3 L614.6 300.6 L618.6 301.0 L622.6 301.5 L626.6 301.9 L630.6 302.5 L634.6 303.0 L638.6 303.6 L642.6 304.2 L646.6 304.8 L650.6 305.4 L654.6 306.1 L658.6 306.8 L662.6 307.5 L666.6 308.2 L670.6 308.9 L674.6 309.7 L678.6 310.4 L682.6 311.1 L686.6 311.7 L690.6 312.4 L694.6 313.0 L698.6 313.5 L702.6 314.1 L706.6 314.5 L710.6 315.0 L714.6 315.3 L718.6 315.6 L722.6 315.9 L726.6 316.1 L730.6 316.3 L734.6 316.4 L738.6 316.5 L742.6 316.6 L746.6 316.6 L750.6 316.7 L754.6 316.9 L758.6 317.0 L762.6 317.3 L766.6 317.6 L770.6 317.9 L774.6 318.4 L778.7 318.9 L782.7 319.5 L786.7 320.1 L790.7 320.7 L794.7 321.4 L798.7 322.1 L802.7 322.8 L806.7 323.4 L810.7 324.1 L814.7 324.7 L818.7 325.3 L822.7 326.0 L826.7 326.6 L830.7 327.1 L834.7 327.7 L838.7 328.3 L842.7 328.8 L846.7 329.4 L850.7 329.9 L854.7 330.4 L858.7 331.0 L862.7 331.5 L866.7 332.0 L870.7 332.6 L874.7 333.1 L878.7 333.6 L882.7 334.0 L886.7 334.5 L890.7 334.8 L894.7 335.2 L898.7 335.5 L902.7 335.7 L906.7 335.9 L910.7 336.0 L914.7 336.1 L918.7 336.1 L922.7 336.1 L926.7 336.1 L930.7 336.1 L934.7 336.1 L938.7 336.1 L942.7 336.2 L946.7 336.2 L950.7 336.3 L954.7 336.4 L958.7 336.5 L962.7 336.6 L966.8 336.7 L970.8 336.8 L974.8 336.9 L978.8 336.9 L982.8 336.9 L986.8 336.7 L990.8 336.4 L994.8 336.0 L998.8 335.5 L1002.8 334.7 L1006.8 333.9 L1010.8 332.8 L1014.8 331.7 L1018.8 330.4 L1022.8 329.0 L1026.8 327.5 L1030.8 325.9 L1034.8 324.2 L1038.8 322.5 L1042.8 320.8 L1046.8 319.0 L1050.8 317.2 L1054.8 315.4 L1058.8 313.7 L1062.8 311.9 L1066.8 310.3 L1070.8 308.7 L1074.8 307.3 L1078.8 305.9 L1082.8 304.8 L1086.8 303.8 L1090.8 302.9 L1094.8 302.2 L1098.8 301.7 L1102.8 301.2 L1106.8 300.8 L1110.8 300.4 L1114.8 299.9 L1118.8 299.5 L1122.8 298.9 L1126.8 298.3 L1130.8 297.6 L1134.8 296.7 L1138.8 295.7 L1142.8 294.6 L1146.8 293.3 L1150.8 292.0 L1154.8 290.6 L1158.8 289.2 L1162.9 287.8 L1166.9 286.5 L1170.9 285.3 L1174.9 284.2 L1178.9 283.4 L1182.9 282.9 L1186.9 282.6 L1190.9 282.5 L1194.9 282.7 L1198.9 283.0 L1202.9 283.4 L1206.9 283.8 L1210.9 284.3 L1214.9 284.7 L1218.9 285.1 L1222.9 285.4 L1226.9 285.5 L1230.9 285.7 L1234.9 285.8 L1238.9 285.9 L1242.9 286.0 L1246.9 286.2 L1250.9 286.5 L1254.9 286.9 L1258.9 287.4 L1262.9 288.1 L1266.9 288.9 L1270.9 289.7 L1274.9 290.5 L1278.9 291.3 L1282.9 292.1 L1286.9 292.8 L1290.9 293.4 L1294.9 293.9 L1298.9 294.4 L1302.9 294.8 L1306.9 295.2 L1310.9 295.6 L1314.9 296.1 L1318.9 296.6 L1322.9 297.3 L1326.9 298.0 L1330.9 298.8 L1334.9 299.7 L1338.9 300.6 L1342.9 301.4 L1346.9 302.2 L1351.0 302.9 L1355.0 303.5 L1359.0 304.0 L1363.0 304.5 L1367.0 305.0 L1371.0 305.6 L1375.0 306.3 L1379.0 307.2 L1383.0 308.3 L1387.0 309.6 L1391.0 310.9 L1395.0 312.3 L1399.0 313.6 L1403.0 314.8 L1407.0 315.8 L1411.0 316.7 L1415.0 317.3 L1419.0 317.7 L1423.0 318.0 L1427.0 318.2 L1431.0 318.3 L1435.0 318.3 L1439.0 318.4 L1443.0 318.5 L1447.0 318.6" fill="none" stroke="#16a08c" stroke-width="2.600" stroke-linejoin="round"/><circle cx="678.7" cy="310.4" r="5.800" fill="#16a08c"/><circle cx="766.0" cy="317.5" r="5.800" fill="#16a08c"/><circle cx="902.3" cy="335.7" r="5.800" fill="#16a08c"/><circle cx="998.7" cy="335.5" r="5.800" fill="#16a08c"/><circle cx="1086.0" cy="304.0" r="5.800" fill="#16a08c"/><circle cx="1182.3" cy="282.9" r="5.800" fill="#16a08c"/><circle cx="1253.3" cy="286.7" r="5.800" fill="#16a08c"/><circle cx="1318.7" cy="296.6" r="5.800" fill="#16a08c"/><circle cx="1375.0" cy="306.3" r="5.800" fill="#16a08c"/><circle cx="1415.0" cy="317.3" r="5.800" fill="#16a08c"/></svg>
<span class="t" style="left:439.20px;top:246px;font-size:13.5px;color:#a6a6bc;letter-spacing:-0.109px;">12dB</span>
<span class="t" style="left:439.60px;top:284px;font-size:13.5px;color:#a6a6bc;letter-spacing:-0.360px;">6dB</span>
<span class="t" style="left:439.78px;top:323px;font-size:13.5px;color:#a6a6bc;letter-spacing:-0.449px;">0dB</span>
<span class="t" style="left:439.69px;top:362px;font-size:13.5px;color:#a6a6bc;letter-spacing:-0.113px;">-6dB</span>
<span class="t" style="left:439.69px;top:401px;font-size:13.5px;color:#a6a6bc;letter-spacing:0.067px;">-12dB</span>
<span class="t" style="left:597.73px;top:459px;font-size:13.5px;color:#a6a6bc;letter-spacing:0.342px;">50</span>
<span class="t" style="left:694.16px;top:459px;font-size:13.5px;color:#a6a6bc;letter-spacing:-0.231px;">100</span>
<span class="t" style="left:790.45px;top:459px;font-size:13.5px;color:#a6a6bc;letter-spacing:-0.100px;">200</span>
<span class="t" style="left:917.73px;top:459px;font-size:13.5px;color:#a6a6bc;">500</span>
<span class="t" style="left:1014.16px;top:459px;font-size:13.5px;color:#a6a6bc;letter-spacing:0.490px;">1k</span>
<span class="t" style="left:1110.45px;top:459px;font-size:13.5px;color:#a6a6bc;letter-spacing:0.640px;">2k</span>
<span class="t" style="left:1237.73px;top:459px;font-size:13.5px;color:#a6a6bc;letter-spacing:0.843px;">5k</span>
<span class="t" style="left:1334.16px;top:459px;font-size:13.5px;color:#a6a6bc;letter-spacing:-0.008px;">10k</span>
<div class="b gb" style="left:437px;top:492px;width:1022px;height:233px;"></div>
<div class="b " style="left:446.1px;top:490px;width:93.2px;height:5px;background:#f0f0f0;"></div>
<span class="t" style="left:449.24px;top:485px;font-size:17.5px;color:#000;letter-spacing:-0.608px;">Band Gains</span>
<span class="t" style="left:471.73px;top:522px;font-size:17.5px;color:#000;letter-spacing:-0.560px;">5.0 dB</span>
<div class="b " style="left:492px;top:543px;width:5px;height:150px;background:#e9e9e9;border:1px solid #d9d9d9;"></div>
<div class="b " style="left:477px;top:592px;width:36px;height:13px;background:#0078d7;"></div>
<span class="t" style="left:488.60px;top:698px;font-size:13.5px;color:#1dd6a6;font-weight:700;letter-spacing:-0.643px;">80</span>
<span class="t" style="left:571.30px;top:522px;font-size:17.5px;color:#000;letter-spacing:-0.474px;">1.5 dB</span>
<div class="b " style="left:592px;top:543px;width:5px;height:150px;background:#e9e9e9;border:1px solid #d9d9d9;"></div>
<div class="b " style="left:577px;top:605px;width:36px;height:13px;background:#0078d7;"></div>
<span class="t" style="left:585.20px;top:698px;font-size:13.5px;color:#2a9d8f;letter-spacing:-0.892px;">150</span>
<span class="t" style="left:669.91px;top:522px;font-size:17.5px;color:#000;letter-spacing:-0.287px;">-1.0 dB</span>
<div class="b " style="left:693px;top:543px;width:5px;height:150px;background:#e9e9e9;border:1px solid #d9d9d9;"></div>
<div class="b " style="left:678px;top:615px;width:37px;height:13px;background:#0078d7;"></div>
<span class="t" style="left:687.60px;top:698px;font-size:13.5px;color:#2a9d8f;letter-spacing:-1.466px;">400</span>
<span class="t" style="left:769.91px;top:522px;font-size:17.5px;color:#000;letter-spacing:-0.287px;">-2.0 dB</span>
<div class="b " style="left:793px;top:543px;width:5px;height:150px;background:#e9e9e9;border:1px solid #d9d9d9;"></div>
<div class="b " style="left:778px;top:619px;width:37px;height:13px;background:#0078d7;"></div>
<span class="t" style="left:786.76px;top:698px;font-size:13.5px;color:#2a9d8f;letter-spacing:-1.044px;">800</span>
<span class="t" style="left:874.21px;top:522px;font-size:17.5px;color:#000;letter-spacing:-0.602px;">3.0 dB</span>
<div class="b " style="left:894px;top:543px;width:5px;height:150px;background:#e9e9e9;border:1px solid #d9d9d9;"></div>
<div class="b " style="left:879px;top:599px;width:37px;height:13px;background:#0078d7;"></div>
<span class="t" style="left:887.11px;top:698px;font-size:13.5px;color:#2a9d8f;letter-spacing:-1.286px;">1.5k</span>
<span class="t" style="left:974.19px;top:522px;font-size:17.5px;color:#000;letter-spacing:-0.599px;">5.0 dB</span>
<div class="b " style="left:994px;top:543px;width:5px;height:150px;background:#e9e9e9;border:1px solid #d9d9d9;"></div>
<div class="b " style="left:979px;top:592px;width:37px;height:13px;background:#0078d7;"></div>
<span class="t" style="left:991.42px;top:698px;font-size:13.5px;color:#2a9d8f;letter-spacing:-1.072px;">3k</span>
<span class="t" style="left:1074.21px;top:522px;font-size:17.5px;color:#000;letter-spacing:-0.602px;">3.5 dB</span>
<div class="b " style="left:1094px;top:543px;width:5px;height:150px;background:#e9e9e9;border:1px solid #d9d9d9;"></div>
<div class="b " style="left:1079px;top:598px;width:37px;height:13px;background:#0078d7;"></div>
<span class="t" style="left:1091.33px;top:698px;font-size:13.5px;color:#2a9d8f;letter-spacing:-0.973px;">5k</span>
<span class="t" style="left:1175.74px;top:522px;font-size:17.5px;color:#000;letter-spacing:-0.562px;">2.5 dB</span>
<div class="b " style="left:1196px;top:543px;width:5px;height:150px;background:#e9e9e9;border:1px solid #d9d9d9;"></div>
<div class="b " style="left:1181px;top:602px;width:36px;height:13px;background:#0078d7;"></div>
<span class="t" style="left:1193.05px;top:698px;font-size:13.5px;color:#2a9d8f;letter-spacing:-1.144px;">8k</span>
<span class="t" style="left:1275.74px;top:522px;font-size:17.5px;color:#000;letter-spacing:-0.562px;">2.0 dB</span>
<div class="b " style="left:1296px;top:543px;width:5px;height:150px;background:#e9e9e9;border:1px solid #d9d9d9;"></div>
<div class="b " style="left:1281px;top:603px;width:36px;height:13px;background:#0078d7;"></div>
<span class="t" style="left:1289.34px;top:698px;font-size:13.5px;color:#2a9d8f;letter-spacing:-0.893px;">12k</span>
<span class="t" style="left:1376.30px;top:522px;font-size:17.5px;color:#000;letter-spacing:-0.474px;">1.5 dB</span>
<div class="b " style="left:1397px;top:543px;width:5px;height:150px;background:#e9e9e9;border:1px solid #d9d9d9;"></div>
<div class="b " style="left:1382px;top:605px;width:36px;height:13px;background:#0078d7;"></div>
<span class="t" style="left:1390.34px;top:698px;font-size:13.5px;color:#2a9d8f;letter-spacing:-0.893px;">16k</span>
<div class="b gb" style="left:437px;top:744px;width:1022px;height:67px;"></div>
<div class="b " style="left:446.4px;top:742px;width:95.2px;height:5px;background:#f0f0f0;"></div>
<span class="t" style="left:449.20px;top:738px;font-size:17.5px;color:#000;letter-spacing:-0.163px;">Band Detail</span>
<span class="t" style="left:449.47px;top:777px;font-size:17.5px;color:#000;font-weight:700;letter-spacing:0.040px;">Band 1 (80 Hz)</span>
<span class="t" style="left:593.30px;top:777px;font-size:17.5px;color:#000;letter-spacing:-0.634px;">Type:</span>
<div class="b combo" style="left:737px;top:769px;width:135.5px;height:30px;"></div>
<span class="t" style="left:742.80px;top:777px;font-size:17.5px;color:#000;letter-spacing:-0.313px;">Low Shelf</span>
<svg style="left:857px;top:782px" width="10" height="6" viewBox="0 0 10 6"><path d="M0.600 0.600l4.400 4.500l4.400 -4.500" fill="none" stroke="#4a4a4a" stroke-width="1.050"/></svg>
<span class="t" style="left:881.24px;top:777px;font-size:17.5px;color:#000;letter-spacing:-0.790px;">Freq:</span>
<div class="b spin" style="left:1023.5px;top:770px;width:134.5px;height:28.5px;"></div>
<div class="b " style="left:1137px;top:770px;width:21px;height:27.5px;background:#f1f1f1;"></div>
<div class="b " style="left:1138px;top:771px;width:18.5px;height:26px;background:#fbfbfb;border:1px solid #cfcfcf;border-radius:2px;"></div>
<div class="b " style="left:1139px;top:784px;width:16.5px;height:1px;background:#d4d4d4;"></div>
<svg style="left:1144.0px;top:776px" width="7" height="4" viewBox="0 0 7 4"><path d="M0 4L3.500 0L7 4Z" fill="#222"/></svg>
<svg style="left:1144.0px;top:789px" width="7" height="4" viewBox="0 0 7 4"><path d="M0 0L3.500 4L7 0Z" fill="#222"/></svg>
<span class="t" style="left:1027.30px;top:778px;font-size:17.5px;color:#000;letter-spacing:-0.432px;">80 Hz</span>
<span class="t" style="left:1167.26px;top:777px;font-size:17.5px;color:#000;letter-spacing:-2.097px;">Q:</span>
<div class="b spin" style="left:1311.5px;top:770px;width:134.5px;height:28.5px;"></div>
<div class="b " style="left:1425px;top:770px;width:21px;height:27.5px;background:#f1f1f1;"></div>
<div class="b " style="left:1426px;top:771px;width:18.5px;height:26px;background:#fbfbfb;border:1px solid #cfcfcf;border-radius:2px;"></div>
<div class="b " style="left:1427px;top:784px;width:16.5px;height:1px;background:#d4d4d4;"></div>
<svg style="left:1432.0px;top:776px" width="7" height="4" viewBox="0 0 7 4"><path d="M0 4L3.500 0L7 4Z" fill="#222"/></svg>
<svg style="left:1432.0px;top:789px" width="7" height="4" viewBox="0 0 7 4"><path d="M0 0L3.500 4L7 0Z" fill="#222"/></svg>
<span class="t" style="left:1314.40px;top:778px;font-size:17.5px;color:#000;letter-spacing:-0.843px;">0.7</span>
<div class="b " style="left:1037px;top:819px;width:71px;height:41px;background:#4a3a2a;border-radius:4px;border:1px solid #3f3124;"></div>
<span class="t" style="left:1059.05px;top:833px;font-size:17.5px;color:#c9a97c;letter-spacing:-0.726px;">Flat</span>
<div class="b " style="left:1116px;top:819px;width:90.5px;height:41px;background:#00d4aa;border-radius:4px;border:1px solid #00c49c;"></div>
<span class="t" style="left:1137.30px;top:833px;font-size:17.5px;color:#0a1628;font-weight:700;letter-spacing:-0.126px;">Apply</span>
<div class="b " style="left:1214px;top:819px;width:152.5px;height:41px;background:#1d6b4a;border-radius:4px;border:1px solid #185c40;"></div>
<span class="t" style="left:1235.76px;top:833px;font-size:17.5px;color:#e6fff2;font-weight:700;letter-spacing:-0.421px;">Save Settings</span>
<div class="b " style="left:1374px;top:819px;width:85px;height:41px;background:#2b3a52;border-radius:4px;border:1px solid #243145;"></div>
<span class="t" style="left:1396.13px;top:833px;font-size:17.5px;color:#c6d2e0;letter-spacing:-0.683px;">Close</span>
</body></html>
